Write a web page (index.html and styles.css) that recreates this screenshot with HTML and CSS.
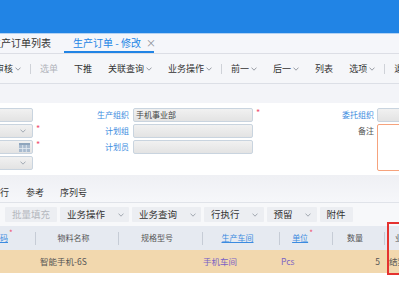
FILE: index.html
```html
<!DOCTYPE html>
<html lang="zh-CN">
<head>
<meta charset="utf-8">
<title>生产订单 - 修改</title>
<link rel="stylesheet" href="styles.css">
</head>
<body>
<div class="app">
  <div class="topbar"></div>
  <div class="tabs">
    <div class="tab first">生产订单列表</div>
    <div class="tab active">生产订单 - 修改<span class="close">×</span></div>
  </div>
  <div class="toolbar">
    <span class="tb first">审核<svg class="dd" width="6" height="4" viewBox="0 0 6 4"><path d="M0.5 0.6 L3 3.2 L5.5 0.6" fill="none" stroke="#8d929b" stroke-width="0.9"/></svg></span>
    <span class="sep"></span>
    <span class="tb disabled">选单</span>
    <span class="tb">下推</span>
    <span class="tb">关联查询<svg class="dd" width="6" height="4" viewBox="0 0 6 4"><path d="M0.5 0.6 L3 3.2 L5.5 0.6" fill="none" stroke="#8d929b" stroke-width="0.9"/></svg></span>
    <span class="tb">业务操作<svg class="dd" width="6" height="4" viewBox="0 0 6 4"><path d="M0.5 0.6 L3 3.2 L5.5 0.6" fill="none" stroke="#8d929b" stroke-width="0.9"/></svg></span>
    <span class="sep"></span>
    <span class="tb">前一<svg class="dd" width="6" height="4" viewBox="0 0 6 4"><path d="M0.5 0.6 L3 3.2 L5.5 0.6" fill="none" stroke="#8d929b" stroke-width="0.9"/></svg></span>
    <span class="tb">后一<svg class="dd" width="6" height="4" viewBox="0 0 6 4"><path d="M0.5 0.6 L3 3.2 L5.5 0.6" fill="none" stroke="#8d929b" stroke-width="0.9"/></svg></span>
    <span class="tb">列表</span>
    <span class="tb">选项<svg class="dd" width="6" height="4" viewBox="0 0 6 4"><path d="M0.5 0.6 L3 3.2 L5.5 0.6" fill="none" stroke="#8d929b" stroke-width="0.9"/></svg></span>
    <span class="sep"></span>
    <span class="tb">退出</span>
  </div>
  <div class="spacer"></div>
  <div class="form">
    <div class="fgrid">
      <div class="inp"></div>
      <span class="star"></span>
      <label class="lbl link">生产组织</label>
      <div class="inp">手机事业部</div>
      <span class="star">*</span>
      <label class="lbl link lc">委托组织</label>
      <div class="inp"></div>

      <div class="inp icon"><svg width="6" height="4" viewBox="0 0 6 4"><path d="M0.5 0.6 L3 3.2 L5.5 0.6" fill="none" stroke="#9aa3ad" stroke-width="0.9"/></svg></div>
      <span class="star">*</span>
      <label class="lbl link">计划组</label>
      <div class="inp"></div>
      <span class="star"></span>
      <label class="lbl lc">备注</label>
      <div class="memo"></div>

      <div class="inp icon cal"><svg width="11" height="9" viewBox="0 0 11 9"><rect x="0" y="0" width="11" height="9" fill="#a9bbcf"/><rect x="0" y="0" width="11" height="2" fill="#8ea5bd"/><path d="M0 5.5 H11 M3.7 2 V9 M7.3 2 V9" stroke="#e6ecf3" stroke-width="0.8"/></svg></div>
      <span class="star">*</span>
      <label class="lbl link">计划员</label>
      <div class="inp"></div>
      <span class="star"></span>
      <span class="lbl"></span>

      <div class="inp icon"><svg width="6" height="4" viewBox="0 0 6 4"><path d="M0.5 0.6 L3 3.2 L5.5 0.6" fill="none" stroke="#9aa3ad" stroke-width="0.9"/></svg></div>
    </div>
  </div>
  <div class="subtabs">
    <span class="st first">行</span>
    <span class="st">参考</span>
    <span class="st">序列号</span>
  </div>
  <div class="gridbar">
    <span class="btn disabled"><span class="bt">批量填充</span></span>
    <span class="btn"><span class="bt">业务操作</span><span class="ba"><svg width="6" height="4" viewBox="0 0 6 4"><path d="M0.5 0.6 L3 3.2 L5.5 0.6" fill="none" stroke="#9aa0a9" stroke-width="0.9"/></svg></span></span>
    <span class="btn"><span class="bt">业务查询</span><span class="ba"><svg width="6" height="4" viewBox="0 0 6 4"><path d="M0.5 0.6 L3 3.2 L5.5 0.6" fill="none" stroke="#9aa0a9" stroke-width="0.9"/></svg></span></span>
    <span class="btn"><span class="bt">行执行</span><span class="ba"><svg width="6" height="4" viewBox="0 0 6 4"><path d="M0.5 0.6 L3 3.2 L5.5 0.6" fill="none" stroke="#9aa0a9" stroke-width="0.9"/></svg></span></span>
    <span class="btn"><span class="bt">预留</span><span class="ba"><svg width="6" height="4" viewBox="0 0 6 4"><path d="M0.5 0.6 L3 3.2 L5.5 0.6" fill="none" stroke="#9aa0a9" stroke-width="0.9"/></svg></span></span>
    <span class="btn"><span class="bt">附件</span></span>
  </div>
  <div class="table">
    <div class="thead">
      <span class="th c1"><span class="link u">编码</span><span class="hstar">*</span></span><i class="vs"></i>
      <span class="th c2">物料名称</span><i class="vs"></i>
      <span class="th c3">规格型号</span><i class="vs"></i>
      <span class="th c4"><span class="link u">生产车间</span></span><i class="vs"></i>
      <span class="th c5"><span class="link u">单位</span><span class="hstar">*</span></span><i class="vs"></i>
      <span class="th c6">数量</span><i class="vs"></i>
      <span class="th c7">业务状态</span>
    </div>
    <div class="trow">
      <span class="td d1"></span>
      <span class="td d2">智能手机-6S</span>
      <span class="td d3"></span>
      <span class="td d4 purple">手机车间</span>
      <span class="td d5 purple">Pcs</span>
      <span class="td d6">5</span>
      <span class="td d7">结案</span>
    </div>
  </div>
  <div class="highlight"></div>
</div>
</body>
</html>
```
FILE: styles.css
```css
* { box-sizing: border-box; margin: 0; padding: 0; }
html, body { width: 399px; height: 300px; overflow: hidden; }
body {
  font-family: "Noto Sans CJK SC", "Noto Sans", sans-serif;
  color: #333;
  background: #fff;
}
.app { position: relative; width: 399px; height: 300px; overflow: hidden; background: #fff; }

.topbar { height: 34px; background: #2184e5; border-bottom: 1px solid #b3d2f3; }

.tabs {
  height: 20px; background: #f5f6fa; border-bottom: 1px solid #dcdee5;
  display: flex; font-size: 10px; line-height: 18px; white-space: nowrap;
}
.tab { height: 19px; color: #333; flex-shrink: 0; }
.tab.first { margin-left: -9px; }
.tab.active {
  margin-left: 13px; width: 90px; padding-left: 9px;
  color: #2184e5; border-bottom: 2px solid #2184e5;
}
.close { color: #8a8e96; font-size: 10px; margin-left: 5px; }

.toolbar {
  height: 30px; background: #f5f6f9; border-bottom: 1px solid #dcdfe6;
  display: flex; align-items: center; font-size: 9px; white-space: nowrap;
}
.tb { padding: 0 8px; display: flex; align-items: center; color: #333; line-height: 12px; flex-shrink: 0; }
.tb.first { margin-left: -13px; }
.tb.disabled { color: #b0b3b9; }
.dd { margin-left: 2px; }
.sep { width: 1px; height: 10px; background: #cfd2d8; margin: 0 1px; flex-shrink: 0; }

.spacer { height: 19px; background: #f3f4f8; }

.form { background: #fff; padding: 5px 0; height: 72px; }
.fgrid {
  margin-left: -50px;
  display: grid;
  grid-template-columns: 83px 14px 86px 120px 14px 110px 70px;
  grid-auto-rows: 14px;
  row-gap: 2px;
  font-size: 8px;
  line-height: 14px;
}
.inp {
  height: 14px;
  border: 1px solid #c9d4df;
  border-radius: 2px;
  background: linear-gradient(#f1f1f1, #e3e3e3);
  color: #444;
  padding-left: 2px;
  line-height: 12px;
  white-space: nowrap;
}
.inp.icon { display: flex; align-items: center; justify-content: flex-end; padding-right: 6px; }
.inp.cal { padding-right: 2px; }
.star { color: #f0506e; font-size: 9px; line-height: 10px; padding-left: 3px; }
.lbl { text-align: right; padding-right: 4px; color: #555; white-space: nowrap; }
.lbl.link { color: #3b8be0; }
.lbl.lc { padding-right: 3px; }
.memo {
  grid-column: 7; grid-row: 2 / span 3;
  height: 47px;
  border: 1px solid #f6a37d; border-radius: 2px; background: #fff;
}

.subtabs {
  height: 28px; padding-top: 9px;
  background: linear-gradient(#eff0f4, #f6f7fa);
  border-bottom: 1px solid #e0e3e9;
  display: flex; font-size: 9px; line-height: 17px; white-space: nowrap;
}
.st { margin-right: 16px; color: #333; flex-shrink: 0; }
.st.first { margin-right: 17px; }

.gridbar {
  height: 23px; background: #f7f8fa; padding-top: 4px; padding-left: 5px;
  display: flex; align-items: flex-start; font-size: 9.5px; white-space: nowrap;
}
.btn { display: flex; height: 15px; line-height: 15px; background: #eceef2; margin-right: 3px; border-radius: 1px; flex-shrink: 0; }
.btn.disabled { color: #b5b8be; }
.bt { padding: 0 7px; }
.ba { width: 17px; display: flex; align-items: center; justify-content: center; }

.table { font-size: 8px; }
.thead {
  height: 24px; background: #e6eaf1; display: flex; align-items: center;
  margin-left: -30px; color: #555; white-space: nowrap;
}
.th { display: block; flex-shrink: 0; line-height: 24px; text-align: center; padding-right: 7px; }
.vs { display: block; flex-shrink: 0; width: 1px; height: 13px; background: #c6ccd6; }
.th.c1 { width: 65px; text-align: left; padding-left: 22px; padding-right: 0; }
.th.c2 { width: 82px; }
.th.c3 { width: 83px; }
.th.c4 { width: 76px; }
.th.c5 { width: 52px; }
.th.c6 { width: 51px; }
.th.c7 { width: 60px; text-align: left; padding-left: 10px; }
.link { color: #3b8be0; }
.u { text-decoration: underline; }
.hstar { color: #f0506e; font-size: 8px; vertical-align: top; line-height: 14px; margin-left: 1px; }

.trow {
  height: 23px; background: #f2d8ae; display: flex; margin-left: -30px;
  font-size: 8.5px; line-height: 23px; color: #555; white-space: nowrap;
}
.td { display: block; flex-shrink: 0; }
.d1 { width: 66px; }
.d2 { width: 83px; padding-left: 4px; }
.d3 { width: 84px; }
.d4 { width: 77px; }
.d5 { width: 53px; padding-left: 1px; }
.d6 { width: 52px; text-align: right; padding-right: 5px; }
.d7 { width: 60px; padding-left: 4px; }
.purple { color: #7a62c4; }

.highlight {
  position: absolute; left: 387px; top: 222px; width: 30px; height: 53px;
  border: 2px solid #e5322f;
}
```
